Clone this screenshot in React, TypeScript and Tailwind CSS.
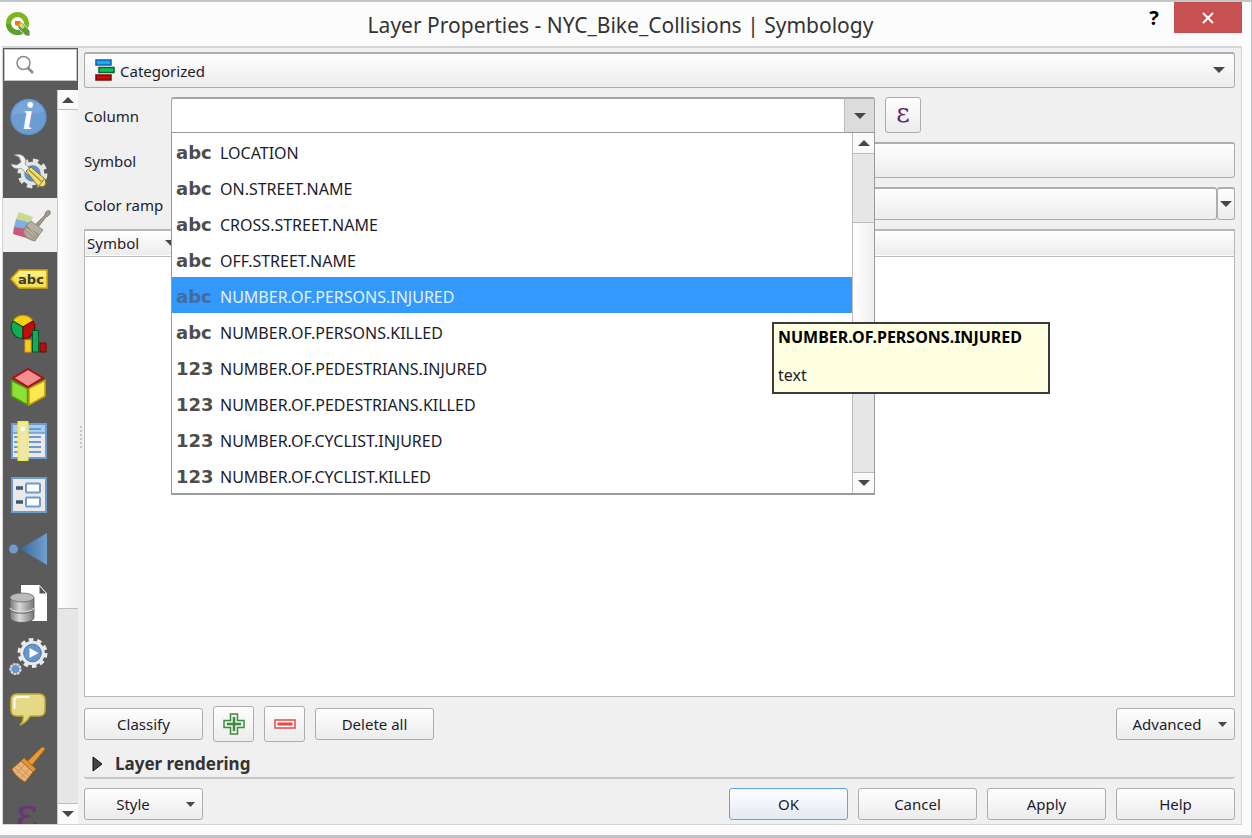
import React, { useState } from "react";

const face = "bg-linear-to-b from-[#fefefe] to-[#ececec] border border-[#adadad]";

function Arrow({ up = false, small = false }: { up?: boolean; small?: boolean }) {
  return (
    <svg width={small ? 9 : 12} height={small ? 5 : 6} viewBox="0 0 12 6" preserveAspectRatio="none" className="shrink-0" aria-hidden="true">
      <path d={up ? "M0 6 6 0l6 6z" : "M0 0h12L6 6z"} fill="#484848" />
    </svg>
  );
}

function Icon({ children }: { children: React.ReactNode }) {
  return (
    <svg width="38" height="40" viewBox="0 0 38 40" aria-hidden="true" className="overflow-visible">
      {children}
    </svg>
  );
}

const InfoIcon = () => (
  <Icon>
    <circle cx="18.5" cy="20" r="18.2" fill="#5d92cc" />
    <circle cx="18.5" cy="20" r="16.8" fill="#6b9cd2" />
    <path d="M2 19a16.500 16.500 0 0 1 32-5C24 20 14 14 2 19z" fill="#82acdb" opacity=".6" />
    <text x="18" y="32" textAnchor="middle" fontSize="37" fontWeight="700" fontStyle="italic" fill="#fff" fontFamily="Liberation Serif, serif">i</text>
  </Icon>
);

const ToolsIcon = () => (
  <Icon>
    <circle cx="22.500" cy="22.500" r="13" fill="none" stroke="#e4e4e4" strokeWidth="4" strokeDasharray="5.500 4.710" />
    <circle cx="22.500" cy="22.500" r="10" fill="#5d8fc8" stroke="#e4e4e4" strokeWidth="3.500" />
    <path d="M4 4c5-2 11 0 12 6l-1 3 7 7-4 4-7-7c-4 2-9 0-10-4l6 1 4-3-2-5z" fill="#f0f0f0" stroke="#8b8b8b" strokeWidth=".8" />
    <path d="M16 20l5-4 14 12 1 5-3 3-5-1z" fill="#eedd72" stroke="#7d7034" strokeWidth="1" />
    <path d="M19 19l13 12M29 35l5-7" stroke="#a8902f" strokeWidth="1.200" fill="none" />
  </Icon>
);

const SymbologyIcon = () => (
  <Icon>
    <path d="M9 7l14 5-3 7L6 14z" fill="#c9d98f" />
    <path d="M6 14l15 4-4 8L4 22z" fill="#7faee2" />
    <path d="M4 22l14 2 5 11L3 29z" fill="#c8597b" />
    <path d="M26 19l9-9c0-3 2-5 5-4 1 3-1 5-4 6l-7 9z" fill="#a49a84" stroke="#7d7565" strokeWidth=".8" />
    <path d="M21 16l12 9-4 5-13-9z" fill="#b5b0a1" stroke="#837d6d" strokeWidth=".8" />
    <path d="M16 21l13 9-4 6c-5-1-10-3-12-9z" fill="#a5a08f" stroke="#837d6d" strokeWidth=".8" />
    <path d="M17 24l6 6M20 23l6 7M16 28l5 5" stroke="#c9c4b4" strokeWidth=".8" />
  </Icon>
);

const LabelsIcon = () => (
  <Icon>
    <path d="M1 20l8-9h28v18H9z" fill="#f8e14f" stroke="#cfa511" strokeWidth="1.500" />
    <path d="M3 19l7-7h26v5H10z" fill="#fff29a" opacity=".7" />
    <text x="21" y="25" textAnchor="middle" fontSize="13" fontWeight="700" fill="#3a3a3a" fontFamily="DejaVu Sans, sans-serif">abc</text>
  </Icon>
);

const DiagramsIcon = () => (
  <Icon>
    <path d="M13 14L3 8a11.600 11.600 0 0 1 20 0z" fill="#f9cf12" stroke="#c98c0b" strokeWidth="1.200" />
    <path d="M13 14L3 8a11.600 11.600 0 0 0 10 17.600z" fill="#0fae55" stroke="#04552a" strokeWidth="1.200" />
    <path d="M13 14l10-6a11.600 11.600 0 0 1-10 17.600z" fill="#c00f0b" stroke="#6e0806" strokeWidth="1.200" />
    <rect x="15" y="27" width="6" height="12" fill="#f9cf12" stroke="#e09a19" />
    <rect x="22.500" y="17.500" width="6" height="21.500" fill="#0fae55" stroke="#04552a" />
    <rect x="30" y="30" width="6" height="9" fill="#b80f0b" stroke="#6e0806" />
  </Icon>
);

const CubeIcon = () => (
  <Icon>
    <path d="M1.500 13.500l16 8V38l-16-9z" fill="#8be234" stroke="#4e9a06" strokeWidth="1.600" />
    <path d="M35 13.500l-16 8V38l16-9z" fill="#fde94f" stroke="#c4a000" strokeWidth="1.600" />
    <path d="M18 2l15 9-15 9-15-9z" fill="#f58f8f" stroke="#a81218" strokeWidth="2" />
  </Icon>
);

const FieldsIcon = () => (
  <Icon>
    <rect x="2" y="3" width="34" height="34" fill="#e9e9e9" stroke="#6d9bd0" strokeWidth="2" />
    <path d="M3 4h32v8H3z" fill="#a9cbe9" />
    <path d="M2 12h34" stroke="#6d9bd0" strokeWidth="1.500" />
    <path d="M19 8h12M19 16h12M19 21h12M19 26h12M19 31h12M4 16h4M4 21h4M4 26h4M4 31h4" stroke="#6d9bd0" strokeWidth="2" />
    <path d="M8.500 1h9v38h-9z" fill="#efe6b4" stroke="#f4ee55" strokeWidth="2" />
    <circle cx="13" cy="8" r="2.200" fill="#fff" />
  </Icon>
);

const FormIcon = () => (
  <Icon>
    <rect x="2" y="3" width="34" height="34" fill="#e9e9e9" stroke="#6d9bd0" strokeWidth="2" />
    <path d="M6 13h7M6 27h7" stroke="#42586d" strokeWidth="3.500" />
    <rect x="16" y="8.500" width="14" height="9" rx="1" fill="#fff" stroke="#6d9bd0" strokeWidth="2" />
    <rect x="16" y="22.500" width="14" height="9" rx="1" fill="#fff" stroke="#6d9bd0" strokeWidth="2" />
  </Icon>
);

const JoinsIcon = () => (
  <Icon>
    <defs>
      <linearGradient id="join" x1="0" x2="1">
        <stop offset="0" stopColor="#39679a" />
        <stop offset="1" stopColor="#719fce" />
      </linearGradient>
    </defs>
    <circle cx="3.500" cy="20" r="4.500" fill="#6d9bd0" />
    <path d="M10 20L37 4v32z" fill="url(#join)" />
  </Icon>
);

const StorageIcon = () => (
  <Icon>
    <defs>
      <linearGradient id="disk" x1="0" x2="1">
        <stop offset="0" stopColor="#777" />
        <stop offset=".4" stopColor="#d9d9d9" />
        <stop offset="1" stopColor="#777" />
      </linearGradient>
    </defs>
    <path d="M11 2h18l8 9v27H11z" fill="#fff" />
    <path d="M29 2v9h8z" fill="#555" stroke="#fff" />
    <path d="M0 15v20c2 6 22 6 24 0V15z" fill="url(#disk)" stroke="#555" strokeWidth=".8" />
    <ellipse cx="12" cy="14.500" rx="12" ry="4.500" fill="#bababa" stroke="#666" strokeWidth=".8" />
    <path d="M0 25c2 5 22 5 24 0" fill="none" stroke="#ddd" strokeWidth="1.200" />
    <path d="M0 26.500c2 5 22 5 24 0" fill="none" stroke="#666" strokeWidth="1" />
  </Icon>
);

const ActionsIcon = () => (
  <Icon>
    <circle cx="22.500" cy="16" r="13" fill="none" stroke="#e9e9e9" strokeWidth="4" strokeDasharray="4.500 3.668" />
    <circle cx="22.500" cy="16" r="10.500" fill="#6496d0" stroke="#e9e9e9" strokeWidth="3.500" />
    <circle cx="22.500" cy="16" r="8.800" fill="none" stroke="#4677ac" strokeWidth="1" />
    <path d="M19.500 11l9 5-9 5z" fill="#fff" />
    <circle cx="5.500" cy="32" r="5" fill="#6496d0" stroke="#d8d8d8" strokeWidth="2.200" strokeDasharray="2.700 .700" />
  </Icon>
);

const DisplayIcon = () => (
  <Icon>
    <path d="M7 3h22q6 0 6 6v10q0 6-6 6H20q-3 6-10 9 4-4 3-9H7q-6 0-6-6V9q0-6 6-6z" fill="#e5d887" stroke="#c2a92f" strokeWidth="1.500" />
    <path d="M4.500 17V10q0-4 4-4h10" fill="none" stroke="#fff" strokeWidth="2" opacity=".85" strokeLinecap="round" />
  </Icon>
);

const RenderingIcon = () => (
  <Icon>
    <path d="M17 17L31 3q3-2 4 1L22 20z" fill="#e59b3a" stroke="#b56c16" strokeWidth="1" />
    <path d="M14 13l12 11-3 3L11 16z" fill="#e09536" stroke="#b56c16" strokeWidth="1" />
    <path d="M11 16l12 11-8 10C10 34 4 29 2 24z" fill="#e8b374" stroke="#b56c16" strokeWidth="1" />
    <path d="M8 20l11 11M5 23l11 10M14 20L7 28M19 24l-8 9" stroke="#c98b46" strokeWidth=".8" />
  </Icon>
);

const VariablesIcon = () => (
  <Icon>
    <text x="17" y="30" textAnchor="middle" fontSize="44" fill="#693675" stroke="#693675" strokeWidth=".5" fontFamily="DejaVu Serif, serif">ε</text>
  </Icon>
);

const pages = [
  { name: "Information", icon: InfoIcon },
  { name: "Source", icon: ToolsIcon },
  { name: "Symbology", icon: SymbologyIcon },
  { name: "Labels", icon: LabelsIcon },
  { name: "Diagrams", icon: DiagramsIcon },
  { name: "3D View", icon: CubeIcon },
  { name: "Fields", icon: FieldsIcon },
  { name: "Attributes Form", icon: FormIcon },
  { name: "Joins", icon: JoinsIcon },
  { name: "Auxiliary Storage", icon: StorageIcon },
  { name: "Actions", icon: ActionsIcon },
  { name: "Display", icon: DisplayIcon },
  { name: "Rendering", icon: RenderingIcon },
  { name: "Variables", icon: VariablesIcon },
];

const columns = [
  ["abc", "LOCATION"],
  ["abc", "ON.STREET.NAME"],
  ["abc", "CROSS.STREET.NAME"],
  ["abc", "OFF.STREET.NAME"],
  ["abc", "NUMBER.OF.PERSONS.INJURED"],
  ["abc", "NUMBER.OF.PERSONS.KILLED"],
  ["123", "NUMBER.OF.PEDESTRIANS.INJURED"],
  ["123", "NUMBER.OF.PEDESTRIANS.KILLED"],
  ["123", "NUMBER.OF.CYCLIST.INJURED"],
  ["123", "NUMBER.OF.CYCLIST.KILLED"],
];

function TitleBar() {
  return (
    <header className="flex h-11 shrink-0 items-start">
      <svg width="26" height="26" viewBox="0 0 26 26" className="ml-[5px] mt-2 shrink-0" role="img" aria-label="QGIS">
        <circle cx="12.500" cy="13.500" r="9" fill="none" stroke="#7fb51e" strokeWidth="5" />
        <path d="M3.500 14a9 9 0 0 0 13 7.500" fill="none" stroke="#5f9f2e" strokeWidth="5" />
        <path d="M13 13l4-1 8 9v5h-4l-8-8z" fill="#5f9c35" stroke="#fbfbfb" strokeWidth=".8" />
        <path d="M13 14l3-2 4 5-3 2z" fill="#d5dd6a" />
        <path d="M10 11h5l1 2-3 3-3-1z" fill="#ee7913" />
      </svg>
      <h1 className="flex-1 pl-19 pt-[7px] text-center text-[21px] leading-8 text-[#333]">
        Layer Properties - NYC_Bike_Collisions | Symbology
      </h1>
      <button aria-label="What's this" className="h-8 w-10 text-xl font-bold leading-none text-black">?</button>
      <button aria-label="Close" className="mr-[9px] flex h-[31px] w-[68px] items-center justify-center bg-[#c75050]">
        <svg width="12" height="12" viewBox="0 0 12 12" aria-hidden="true">
          <path d="M1 1l10 10M11 1L1 11" stroke="#fff" strokeWidth="2" />
        </svg>
      </button>
    </header>
  );
}

function Sidebar() {
  const [page, setPage] = useState("Symbology");
  return (
    <aside className="flex w-[75px] shrink-0 flex-col bg-[#5b5b5b]">
      <label className="mx-px mt-px flex h-8 shrink-0 items-center border border-[#c4c4c4] bg-white pl-2.5">
        <svg width="20" height="20" viewBox="0 0 20 20" fill="none" stroke="#8a8a8a" className="shrink-0" aria-hidden="true">
          <circle cx="8.500" cy="8" r="6.500" strokeWidth="1.500" />
          <path d="M13 13l5 5" strokeWidth="2.500" />
        </svg>
        <input type="search" aria-label="Search" className="w-full min-w-0 bg-transparent outline-none" />
      </label>
      <div className="mt-[9px] flex min-h-0 flex-1">
        <nav className="flex w-[54px] shrink-0 flex-col overflow-hidden">
          {pages.map(({ name, icon: PageIcon }) => (
            <button
              key={name}
              aria-label={name}
              onClick={() => setPage(name)}
              className={`flex h-[54px] shrink-0 items-center pl-[7px] ${page === name ? "bg-[#f0f0f0]" : ""}`}
            >
              <PageIcon />
            </button>
          ))}
        </nav>
        <div className="flex flex-1 flex-col border-l border-[#c8c8c8] bg-[#e6e6e6]">
          <button aria-label="Scroll up" className="flex h-5 shrink-0 items-center justify-center border-b border-[#bdbdbd] bg-[#fafafa]"><Arrow up /></button>
          <div className="h-[68%] border-b border-[#bdbdbd] bg-linear-to-r from-white to-[#efefef]" />
          <div className="flex-1" />
          <button aria-label="Scroll down" className="flex h-[21px] shrink-0 items-center justify-center border-t border-[#bdbdbd] bg-[#fafafa]"><Arrow /></button>
        </div>
      </div>
    </aside>
  );
}

function ColumnPicker() {
  const [value, setValue] = useState("");
  return (
    <div className="relative w-[704px]">
      <div className="flex h-9 overflow-hidden rounded-t-[3px] border border-t-2 border-[#a6a6a6] bg-white">
        <input
          id="column"
          role="combobox"
          aria-expanded="true"
          aria-controls="column-list"
          value={value}
          onChange={(e) => setValue(e.target.value)}
          className="min-w-0 flex-1 px-2 outline-none"
        />
        <button aria-label="Show columns" className="flex w-[30px] items-center justify-center border-l border-[#bdbdbd] bg-[#dcdcdc]"><Arrow /></button>
      </div>
      <div className="absolute inset-x-0 top-[35px] z-10 flex border border-b-2 border-[#9a9a9a] bg-white">
        <ul id="column-list" role="listbox" aria-label="Columns" className="flex-1">
          {columns.map(([kind, name], i) => {
            const active = i === 4;
            return (
              <li
                key={name}
                role="option"
                aria-selected={active}
                onClick={() => setValue(name)}
                className={`flex h-9 items-center gap-1.5 pl-1 pt-1 ${active ? "bg-[#3399ff] text-[#e4f1ff]" : "text-[#1c1c2c]"}`}
              >
                <span className={`w-[38px] shrink-0 font-['DejaVu_Sans',sans-serif] text-lg font-bold ${active ? "text-[#446c98]" : "text-[#4d4d4d]"}`}>{kind}</span>
                <span className="text-base">{name}</span>
              </li>
            );
          })}
        </ul>
        <div className="flex w-[22px] flex-col border-l border-[#bdbdbd] bg-[#e6e6e6]">
          <button aria-label="Scroll list up" className="flex h-[21px] items-center justify-center border-b border-[#bdbdbd] bg-[#fafafa]"><Arrow up /></button>
          <div className="h-[68px]" />
          <div className="h-[172px] border-y border-[#bdbdbd] bg-linear-to-r from-white to-[#efefef]" />
          <div className="flex-1" />
          <button aria-label="Scroll list down" className="flex h-[21px] items-center justify-center border-t border-[#bdbdbd] bg-[#fafafa]"><Arrow /></button>
        </div>
      </div>
      <div role="tooltip" className="absolute left-[601px] top-[225px] z-20 h-[72px] w-[278px] whitespace-nowrap border-2 border-[#3c3c3c] bg-[#ffffe1] px-1 pt-1 text-base leading-[18px] text-[#1c1c2c]">
        <p className="font-bold text-black">NUMBER.OF.PERSONS.INJURED</p>
        <p className="mt-5">text</p>
      </div>
    </div>
  );
}

const push = `${face} flex h-8 items-center justify-center rounded-[3px]`;
const tool = `${face} flex items-center justify-center rounded-[3px]`;

function SymbologyPage() {
  return (
    <main className="flex min-w-0 flex-1 flex-col px-1.5 pb-1 pt-1">
      <div className="relative flex items-center">
        <svg width="20" height="22" viewBox="0 0 20 22" className="pointer-events-none absolute left-[11px]" aria-hidden="true">
          <rect x="1" y="1" width="15" height="5" fill="#15b3dc" stroke="#1258c4" strokeWidth="1.500" />
          <rect x="4" y="8.500" width="15" height="5" fill="#0cc25b" stroke="#08622e" strokeWidth="1.500" />
          <rect x="1" y="16" width="15" height="5" fill="#c40d0a" stroke="#7e0806" strokeWidth="1.500" />
        </svg>
        <select aria-label="Renderer" className={`${face} h-9 w-full appearance-none rounded-[3px] border-t-2 pl-[35px]`}>
          <option>Categorized</option>
        </select>
        <span className="pointer-events-none absolute right-2.5"><Arrow /></span>
      </div>

      <div className="mt-[9px] grid grid-cols-[87px_minmax(0,1fr)] items-center gap-y-[9px]">
        <label htmlFor="column" className="pt-0.5">Column</label>
        <div className="flex items-center gap-2.5">
          <ColumnPicker />
          <button aria-label="Expression" className={`${tool} size-9 font-['DejaVu_Serif',serif] text-[26px] leading-none text-[#5e2f6b]`}>
            <span className="pb-1">ε</span>
          </button>
        </div>
        <label htmlFor="symbol" className="pt-0.5">Symbol</label>
        <button id="symbol" className={`${face} h-9 rounded-[3px] border-t-2`} />
        <label htmlFor="ramp" className="pt-0.5">Color ramp</label>
        <div className="flex">
          <button id="ramp" className={`${face} h-[33px] flex-1 rounded-[3px] border-t-2`} />
          <button aria-label="Color ramp menu" className={`${face} flex h-[33px] w-[18px] items-center justify-center rounded-[3px] border-t-2`}><Arrow /></button>
        </div>
      </div>

      <div className="mt-[9px] min-h-0 flex-1 border border-t-2 border-[#b8b8b8] bg-white">
        <table className="w-full border-collapse">
          <thead>
            <tr className="h-[25px] border-b border-[#bdbdbd] bg-linear-to-b from-white to-[#ececec] text-left">
              <th className="w-25 px-0.5 py-0 font-normal leading-6">
                <span className="flex items-center gap-[26px]">Symbol <Arrow /></span>
              </th>
              <th className="p-0" />
            </tr>
          </thead>
          <tbody />
        </table>
      </div>

      <div className="mt-[9px] flex items-center gap-2.5">
        <button className={`${push} w-[119px]`}>Classify</button>
        <button aria-label="Add category" className={`${tool} h-9 w-[41px]`}>
          <svg width="22" height="22" viewBox="0 0 22 22" fill="none" stroke="#3f8a45" aria-hidden="true">
            <path d="M7.500 1h7v6.500H21v7h-6.500V21h-7v-6.500H1v-7h6.500z" fill="#eef6ee" strokeWidth="1.500" />
            <path d="M11 4v14M4 11h14" strokeWidth="2.500" />
          </svg>
        </button>
        <button aria-label="Remove category" className={`${tool} h-9 w-[41px]`}>
          <svg width="22" height="10" viewBox="0 0 22 10" aria-hidden="true">
            <rect x="1" y="1" width="20" height="8" fill="#fff" stroke="#ef4444" strokeWidth="1.500" />
            <rect x="3.500" y="3.500" width="15" height="3" fill="#ef4444" />
          </svg>
        </button>
        <button className={`${push} w-[119px]`}>Delete all</button>
        <button className={`${push} ml-auto w-[119px] gap-4 pl-2`}>Advanced <Arrow small /></button>
      </div>

      <div className="mt-2 h-[29px] rounded-b-[3px] border-b-2 border-[#c6c6c6]">
        <button aria-expanded="false" className="flex items-center gap-3 pl-2 text-[17px] font-bold leading-[27px] text-[#333]">
          <svg width="11" height="16" viewBox="0 0 11 16" aria-hidden="true"><path d="M1 1l9 7-9 7z" fill="#444" stroke="#111" /></svg>
          Layer rendering
        </button>
      </div>

      <footer className="mt-[9px] flex gap-2.5">
        <button className={`${push} mr-auto w-[119px] gap-9 pl-6`}>Style <Arrow small /></button>
        <button className="flex h-8 w-[119px] items-center justify-center rounded-[3px] border border-[#5aa5ee] bg-linear-to-b from-[#fefefe] to-[#e4eaf1]">OK</button>
        <button className={`${push} w-[119px]`}>Cancel</button>
        <button className={`${push} w-[119px]`}>Apply</button>
        <button className={`${push} w-[119px]`}>Help</button>
      </footer>
    </main>
  );
}

export default function App() {
  return (
    <div className="flex h-screen flex-col bg-[#b5c6c9] pb-px font-['Noto_Sans',sans-serif] text-[15px] leading-5 text-[#1c1c2c]">
      <div className="flex min-h-0 flex-1 flex-col border-y-2 border-r border-[#c3c6c6] bg-[#fcfcfc]">
        <TitleBar />
        <div className="mb-2.5 ml-[2px] mr-[9px] flex min-h-0 flex-1 border-x border-t-2 border-b border-[#d6d6d6] bg-[#f0f0f0]">
          <Sidebar />
          <div className="relative flex min-w-0 flex-1">
            <div className="absolute left-0.5 top-1/2 -mt-2.5 flex flex-col gap-0.5" aria-hidden="true">
              {[0, 1, 2, 3, 4, 5].map((n) => (
                <span key={n} className="size-0.5 bg-[#c4c4c4]" />
              ))}
            </div>
            <SymbologyPage />
          </div>
        </div>
      </div>
    </div>
  );
}
